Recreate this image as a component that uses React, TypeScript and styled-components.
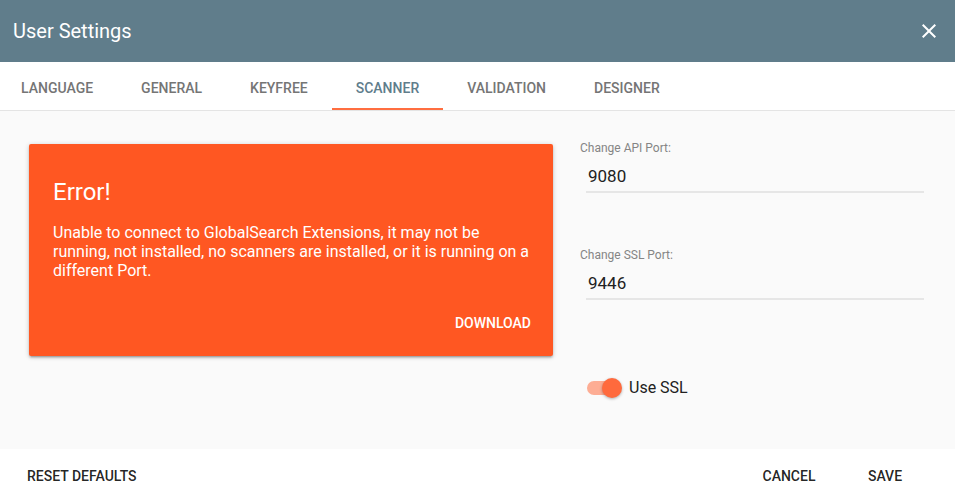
import React, { useState } from "react";
import styled, { createGlobalStyle } from "styled-components";

const Global = createGlobalStyle`
  html, body { margin: 0; padding: 0; }
  body {
    font-family: Roboto, "Liberation Sans", Arial, sans-serif;
    -webkit-font-smoothing: antialiased;
  }
  * { box-sizing: border-box; }
`;

const Dialog = styled.div`
  width: 955px;
  height: 499px;
  display: flex;
  flex-direction: column;
  background: #ffffff;
  overflow: hidden;
`;

const Header = styled.header`
  height: 62px;
  flex: none;
  display: flex;
  align-items: center;
  justify-content: space-between;
  padding: 0 14px 0 13px;
  background: #607d8b;
  color: #ffffff;
`;

const Title = styled.h1`
  margin: 0;
  font-size: 20px;
  font-weight: 400;
  line-height: 28px;
`;

const CloseButton = styled.button`
  width: 24px;
  height: 24px;
  padding: 0;
  border: 0;
  background: transparent;
  color: #ffffff;
  display: flex;
  align-items: center;
  justify-content: center;
  cursor: pointer;
`;

const TabBar = styled.nav`
  height: 49px;
  flex: none;
  display: flex;
  margin-left: -3px;
  border-bottom: 1px solid #e4e4e4;
  background: #ffffff;
`;

const Tab = styled.button<{ $active?: boolean }>`
  position: relative;
  height: 48px;
  padding: 3px 24px 0;
  border: 0;
  background: transparent;
  font-family: inherit;
  font-size: 14px;
  font-weight: 500;
  text-transform: uppercase;
  color: ${(p) => (p.$active ? "#607d8b" : "#757575")};
  cursor: pointer;
  &::after {
    content: "";
    position: absolute;
    left: 0;
    right: 0;
    bottom: 0;
    height: 2px;
    background: ${(p) => (p.$active ? "#ff6e40" : "transparent")};
  }
`;

const Content = styled.main`
  flex: 1;
  display: flex;
  align-items: flex-start;
  gap: 27px;
  padding: 29px 31px 0 29px;
  background: #fafafa;
`;

const ErrorCard = styled.section`
  width: 524px;
  flex: none;
  display: flex;
  flex-direction: column;
  margin-top: 4px;
  padding-top: 32px;
  background: #ff5722;
  color: #ffffff;
  border-radius: 2px;
  box-shadow: 0 2px 2px rgba(0, 0, 0, 0.14), 0 3px 1px -2px rgba(0, 0, 0, 0.12),
    0 1px 5px rgba(0, 0, 0, 0.2);
`;

const CardTitle = styled.h2`
  margin: 0 24px;
  font-size: 24px;
  font-weight: 400;
  line-height: 32px;
`;

const CardText = styled.p`
  margin: 15px 24px 0;
  font-size: 16px;
  line-height: 19px;
`;

const CardActions = styled.div`
  display: flex;
  justify-content: flex-end;
  padding: 25px 14px 15px;
`;

const FlatButton = styled.button<{ $light?: boolean }>`
  height: 36px;
  min-width: 88px;
  padding: 0 ${(p) => (p.$light ? "8px" : "16px")};
  border: 0;
  border-radius: 2px;
  background: transparent;
  font-family: inherit;
  font-size: 14px;
  font-weight: 500;
  text-transform: uppercase;
  color: ${(p) => (p.$light ? "#ffffff" : "rgba(0, 0, 0, 0.87)")};
  cursor: pointer;
`;

const Settings = styled.div`
  flex: 1;
  display: flex;
  flex-direction: column;
`;

const Field = styled.label`
  display: flex;
  flex-direction: column;
  margin-bottom: 54px;
`;

const FieldLabel = styled.span`
  font-size: 12px;
  line-height: 16px;
  color: #858585;
`;

const PortInput = styled.input`
  margin: 6px 0 0 6px;
  height: 31px;
  padding: 0 2px 1px;
  border: 0;
  border-bottom: 2px solid #e6e6e6;
  background: transparent;
  font-family: inherit;
  font-size: 17px;
  color: #212121;
  outline: none;
`;

const ToggleRow = styled.label`
  display: flex;
  align-items: center;
  gap: 8px;
  margin: 24px 0 0 7px;
  font-size: 16px;
  color: #212121;
  cursor: pointer;
`;

const Track = styled.span<{ $on: boolean }>`
  position: relative;
  width: 34px;
  height: 14px;
  border-radius: 7px;
  background: ${(p) => (p.$on ? "rgba(255, 110, 64, 0.55)" : "rgba(0,0,0,0.38)")};
`;

const Thumb = styled.span<{ $on: boolean }>`
  position: absolute;
  top: -3px;
  left: ${(p) => (p.$on ? "15px" : "-3px")};
  width: 20px;
  height: 20px;
  border-radius: 50%;
  background: ${(p) => (p.$on ? "#ff6a3d" : "#f1f1f1")};
  box-shadow: 0 1px 3px rgba(0, 0, 0, 0.3);
`;

const Footer = styled.footer`
  height: 50px;
  flex: none;
  display: flex;
  align-items: center;
  justify-content: space-between;
  padding: 4px 26px 0 11px;
  background: #ffffff;
`;

const FooterGroup = styled.div`
  display: flex;
  gap: 8px;
`;

const tabs = ["Language", "General", "Keyfree", "Scanner", "Validation", "Designer"];

export default function App() {
  const [active, setActive] = useState("Scanner");
  const [ssl, setSsl] = useState(true);
  const [apiPort, setApiPort] = useState("9080");
  const [sslPort, setSslPort] = useState("9446");

  return (
    <>
      <Global />
      <Dialog>
        <Header>
          <Title>User Settings</Title>
          <CloseButton aria-label="Close">
            <svg width="24" height="24" viewBox="0 0 24 24" fill="currentColor">
              <path d="M19 6.41L17.59 5 12 10.59 6.41 5 5 6.41 10.59 12 5 17.59 6.41 19 12 13.41 17.59 19 19 17.59 13.41 12z" />
            </svg>
          </CloseButton>
        </Header>
        <TabBar>
          {tabs.map((t) => (
            <Tab key={t} $active={t === active} onClick={() => setActive(t)}>
              {t}
            </Tab>
          ))}
        </TabBar>
        <Content>
          <ErrorCard>
            <CardTitle>Error!</CardTitle>
            <CardText>
              Unable to connect to GlobalSearch Extensions, it may not be running, not
              installed, no scanners are installed, or it is running on a different Port.
            </CardText>
            <CardActions>
              <FlatButton $light>Download</FlatButton>
            </CardActions>
          </ErrorCard>
          <Settings>
            <Field>
              <FieldLabel>Change API Port:</FieldLabel>
              <PortInput value={apiPort} onChange={(e) => setApiPort(e.target.value)} />
            </Field>
            <Field>
              <FieldLabel>Change SSL Port:</FieldLabel>
              <PortInput value={sslPort} onChange={(e) => setSslPort(e.target.value)} />
            </Field>
            <ToggleRow onClick={() => setSsl(!ssl)}>
              <Track $on={ssl}>
                <Thumb $on={ssl} />
              </Track>
              Use SSL
            </ToggleRow>
          </Settings>
        </Content>
        <Footer>
          <FlatButton>Reset Defaults</FlatButton>
          <FooterGroup>
            <FlatButton>Cancel</FlatButton>
            <FlatButton>Save</FlatButton>
          </FooterGroup>
        </Footer>
      </Dialog>
    </>
  );
}
